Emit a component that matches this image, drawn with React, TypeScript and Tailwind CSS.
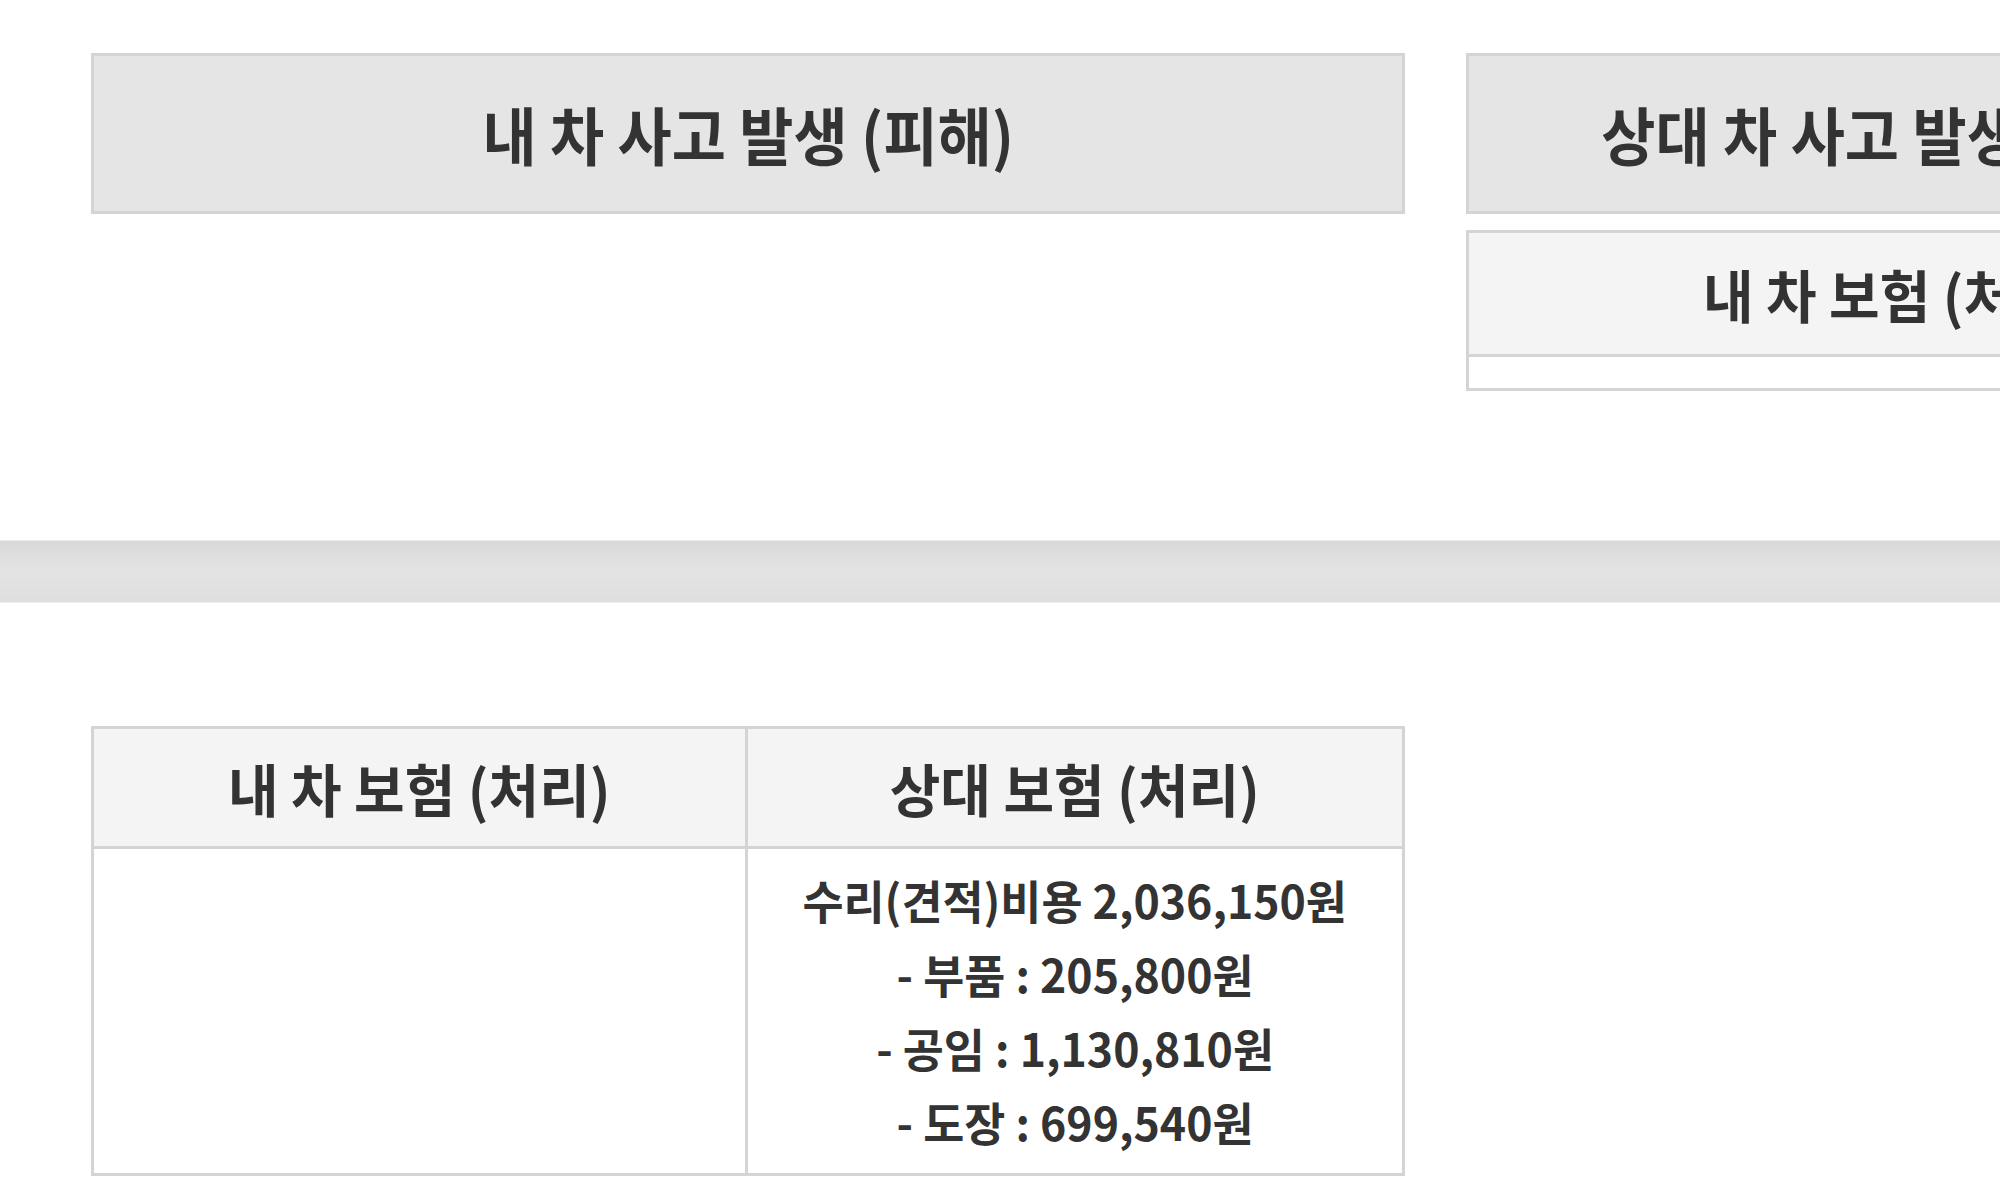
import React from "react";

const lines = [
  "수리(견적)비용 2,036,150원",
  "- 부품 : 205,800원",
  "- 공임 : 1,130,810원",
  "- 도장 : 699,540원",
];

export default function App() {
  return (
    <div className="h-[1200px] w-[2000px] overflow-hidden bg-white font-['Noto_Sans_CJK_KR',sans-serif] font-bold text-[#333]">
      {/* Top row */}
      <div className="flex gap-[61px] pl-[91px] pt-[53px]">
        <div className="flex h-[161px] w-[1314px] shrink-0 items-center justify-center border-[3px] border-[#d4d4d4] bg-[#e5e5e5]">
          <span className="inline-block scale-x-[0.935] whitespace-nowrap text-[63px]">내 차 사고 발생 (피해)</span>
        </div>

        <div className="flex w-[856px] shrink-0 flex-col gap-[16px]">
          <div className="flex h-[161px] items-center justify-center border-[3px] border-[#d4d4d4] bg-[#e5e5e5]">
            <span className="inline-block scale-x-[0.935] whitespace-nowrap text-[63px]">상대 차 사고 발생 (가해)</span>
          </div>
          <div className="border-[3px] border-[#d4d4d4]">
            <div className="flex h-[124px] items-center justify-center border-b-[3px] border-[#d4d4d4] bg-[#f4f4f4]">
              <span className="inline-block scale-x-[0.965] whitespace-nowrap text-[57px]">내 차 보험 (처리)</span>
            </div>
            <div className="h-[31px] bg-white"></div>
          </div>
        </div>
      </div>

      {/* Divider band */}
      <div className="mt-[149px] h-[63px] border-y border-[#ededed] bg-linear-to-b from-[#d9d9d9] via-[#e4e4e4] to-[#dedede]"></div>

      {/* Bottom table */}
      <div className="ml-[91px] mt-[123px] w-[1314px] border-[3px] border-[#d4d4d4]">
        <div className="grid grid-cols-2 border-b-[3px] border-[#d4d4d4] bg-[#f4f4f4]">
          <div className="flex h-[117px] items-center justify-center border-r-[3px] border-[#d4d4d4]">
            <span className="inline-block scale-x-[0.965] whitespace-nowrap text-[57px]">내 차 보험 (처리)</span>
          </div>
          <div className="flex h-[117px] items-center justify-center">
            <span className="inline-block scale-x-[0.965] whitespace-nowrap text-[57px]">상대 보험 (처리)</span>
          </div>
        </div>
        <div className="grid grid-cols-2">
          <div className="h-[324px] border-r-[3px] border-[#d4d4d4]"></div>
          <div className="flex h-[324px] flex-col items-center justify-center pb-[2px]">
            {lines.map((t, i) => (
              <span key={i} className="inline-block scale-x-[0.97] whitespace-nowrap text-[46px] leading-[74px]">
                {t}
              </span>
            ))}
          </div>
        </div>
      </div>
    </div>
  );
}
